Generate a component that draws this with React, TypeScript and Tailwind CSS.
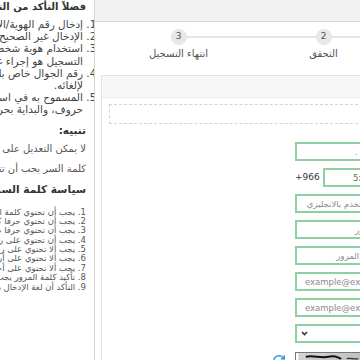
import { RefreshCw } from 'lucide-react';

const notes = [
  ['إدخال رقم الهوية/الإقامة الخاصة بك بشكل صحيح.'],
  ['الإدخال غير الصحيح لرقم الهوية يؤدي إلى رفض الطلب.'],
  ['استخدام هوية شخص آخر في', 'التسجيل هو إجراء غير قانوني.'],
  ['رقم الجوال خاص بك وسيتم إرسال رمز التحقق', 'لإلغائه.'],
  ['المسموح به في اسم المستخدم هو الأرقام و', 'حروف، والبداية بحرف إنجليزي.'],
];

const policy = [
  'يجب أن تحتوي كلمة المرور على 8 خانات على الأقل.',
  'يجب أن تحتوي حرفا كبيرا واحدا على الأقل.',
  'يجب أن تحتوي حرفا صغيرا واحدا على الأقل.',
  'يجب أن تحتوي على رقم واحد على الأقل.',
  'يجب ألا تحتوي على رقم الهوية.',
  'يجب ألا تحتوي على أرقام متسلسلة.',
  'يجب ألا تحتوي على أحرف مكررة.',
  'تأكيد كلمة المرور يجب أن يطابق كلمة المرور.',
  'التأكد أن لغة الإدخال هي الإنجليزية.',
];

function Field({ placeholder, ltr }: { placeholder: string; ltr?: boolean }) {
  return (
    <input
      dir={ltr ? 'ltr' : 'rtl'}
      placeholder={placeholder}
      className={`h-[19px] w-full border-2 border-[#8fd19e] bg-white text-[8.5px] text-[#333] outline-none placeholder:text-[#8a8a8a] ${
        ltr ? 'pl-[8px] pr-[6px]' : 'px-[6px]'
      }`}
    />
  );
}

export default function App() {
  return (
    <div className="w-[360px] h-[360px] overflow-hidden bg-white font-['DejaVu_Sans',sans-serif]">
      <div className="flex w-[570px] h-[360px]">
        {/* Sidebar notes */}
        <aside dir="rtl" className="w-[95px] shrink-0 overflow-hidden border-r border-[#d6d6d6] pr-[8px] text-right">
          <h3 className="h-[13px] whitespace-nowrap text-[10px] font-bold leading-[13px] text-[#333]">
            فضلاً التأكد من التالي قبل التسجيل:
          </h3>
          <ol className="mt-[5px] list-decimal pr-[3px] text-[10.5px] leading-[12.2px] text-[#444]">
            {notes.map((lines, i) => (
              <li key={i} className="whitespace-nowrap">
                {lines.map((l, j) => (
                  <span key={j} className="block h-[12.2px]">
                    {l}
                  </span>
                ))}
              </li>
            ))}
          </ol>
          <h4 className="mt-[7px] h-[14px] whitespace-nowrap text-[10.5px] font-bold leading-[14px] text-[#333]">تنبيه:</h4>
          <p className="mt-[5px] h-[14px] whitespace-nowrap text-[10px] leading-[14px] text-[#555]">
            لا يمكن التعديل على اسم المستخدم بعد التسجيل.
          </p>
          <p className="mt-[6px] h-[14px] whitespace-nowrap text-[10px] leading-[14px] text-[#555]">
            كلمة السر يجب أن تتبع سياسة كلمة السر التالية.
          </p>
          <h4 className="mt-[6px] h-[14px] whitespace-nowrap text-[10.5px] font-bold leading-[14px] text-[#333]">
            سياسة كلمة السر:
          </h4>
          <ol className="mt-[12px] list-inside list-decimal text-[8.5px] leading-[9.4px] text-[#555]">
            {policy.map((p) => (
              <li key={p} className="h-[9.4px] whitespace-nowrap">
                {p}
              </li>
            ))}
          </ol>
        </aside>

        {/* Main */}
        <main className="flex flex-1 flex-col">
          <div className="h-[22px] shrink-0 border-b border-[#d9d9d9] bg-[#f2f2f2]" />

          {/* Stepper */}
          <div className="h-[53px] shrink-0 pt-[7px]">
            <div dir="rtl" className="relative ml-[11px] grid w-[435px] grid-cols-3">
              <div className="absolute left-[72px] right-[72px] top-[7px] h-[2px] bg-[#e6e6e6]" />
              {['البيانات الأساسية', 'التحقق', 'انتهاء التسجيل'].map((label, i) => (
                <div key={label} className="relative flex flex-col items-center">
                  <div className="flex h-[16px] w-[16px] items-center justify-center rounded-full bg-[#e8e8e8] text-[9px] text-[#555]">
                    {i + 1}
                  </div>
                  <span className="mt-[3px] text-[10px] leading-[12px] text-[#555]">{label}</span>
                </div>
              ))}
            </div>
          </div>

          {/* Card */}
          <div className="ml-[6px] flex-1 border border-[#e3e3e3]">
            <div className="h-[22px] border-b border-[#ececec] bg-[#f7f7f7]" />
            <div className="pl-[7px] pt-[6px]">
              <div className="h-[20px] border border-dashed border-[#f2c4cc]" />

              <div className="ml-[186px] mt-[18px] flex w-[110px] flex-col gap-[7px]">
                <Field placeholder="رقم الهوية ." />
                <div className="flex h-[19px] items-center">
                  <span className="w-[28px] shrink-0 text-[9px] text-[#333]">+966</span>
                  <input
                    dir="ltr"
                    placeholder="5xxxxxxxx"
                    className="h-[19px] w-[82px] shrink-0 border-2 border-[#8fd19e] pl-[28px] pr-[6px] text-[8.5px] outline-none placeholder:text-[#666]"
                  />
                </div>
                <Field placeholder="اسم المستخدم بالانجليزي" />
                <Field placeholder="كلمة المرور" />
                <Field placeholder="تأكيد كلمة المرور" />
                <Field ltr placeholder="example@example.com" />
                <Field ltr placeholder="example@example.com" />
                <div className="flex h-[19px] items-center border-2 border-[#8fd19e] pl-[4px]">
                  <svg width="7" height="5" viewBox="0 0 7 5">
                    <path d="M1 1l2.5 2.5L6 1" fill="none" stroke="#333" strokeWidth="1.6" />
                  </svg>
                </div>
                <div className="-ml-[23px] mt-[2px] flex items-start gap-[9px]">
                  <RefreshCw className="mt-[2px] h-[14px] w-[14px] text-[#2b9ad8]" strokeWidth={2.5} />
                  <svg width="100" height="30" viewBox="0 0 100 30" className="border border-[#777]">
                    <defs>
                      <linearGradient id="cg" x1="0" y1="0" x2="1" y2="1">
                        <stop offset="0" stopColor="#d8d8d8" />
                        <stop offset="1" stopColor="#9a9a9a" />
                      </linearGradient>
                    </defs>
                    <rect width="100" height="30" fill="url(#cg)" />
                    <path d="M8 4c8-2 16 2 24 0s10 1 14 2" fill="none" stroke="#111" strokeWidth="2" />
                    <path d="M52 6c4-1 8 1 12 0M70 6h6M82 7h6" fill="none" stroke="#333" strokeWidth="1.5" />
                  </svg>
                </div>
              </div>
            </div>
          </div>
        </main>
      </div>
    </div>
  );
}
